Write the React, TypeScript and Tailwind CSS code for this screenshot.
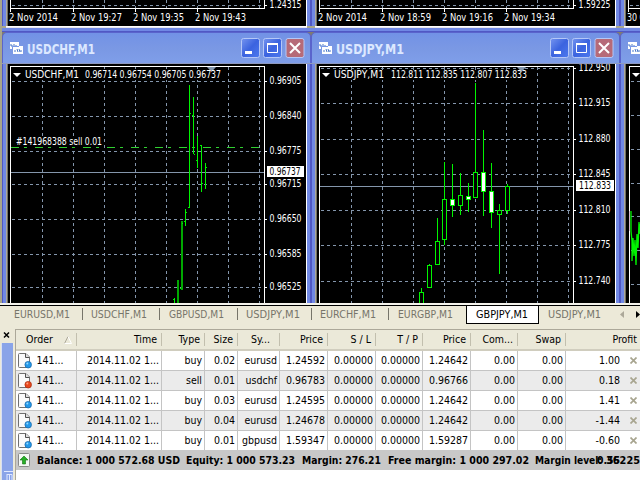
import React from "react";

type Label = { y: number; text: string };
type Candle = { x: number; high: number; low: number; top: number; bottom: number; filled?: boolean };
type Bar = { x: number; high: number; low: number; open?: number; close?: number; wide?: boolean };

const GRID = "#8496ac";
const LIME = "#00f400";

const usdchfLabels: Label[] = [
  { y: 81, text: "0.96905" },
  { y: 116, text: "0.96840" },
  { y: 151, text: "0.96775" },
  { y: 184, text: "0.96715" },
  { y: 219, text: "0.96650" },
  { y: 254, text: "0.96585" },
  { y: 287, text: "0.96525" },
];

const usdjpyLabels: Label[] = [
  { y: 68, text: "112.950" },
  { y: 103, text: "112.915" },
  { y: 139, text: "112.880" },
  { y: 174, text: "112.845" },
  { y: 210, text: "112.810" },
  { y: 245, text: "112.775" },
  { y: 281, text: "112.740" },
];

const bars: Bar[] = [
  { x: 174, high: 298, low: 303, open: 299 },
  { x: 177, high: 280, low: 303, wide: true },
  { x: 181, high: 221, low: 290, open: 288, close: 223, wide: true },
  { x: 185, high: 209, low: 226, open: 221, close: 212 },
  { x: 189, high: 85, low: 208, open: 207, close: 113 },
  { x: 193, high: 97, low: 154, open: 115, close: 154 },
  { x: 197, high: 136, low: 168, open: 160 },
  { x: 201, high: 145, low: 192, open: 145, close: 183 },
  { x: 205, high: 163, low: 189, close: 167 },
];

const candles: Candle[] = [
  { x: 421, high: 288, low: 303, top: 292, bottom: 306 },
  { x: 429, high: 264, low: 287, top: 265, bottom: 287 },
  { x: 437, high: 218, low: 264, top: 241, bottom: 264 },
  { x: 444, high: 162, low: 245, top: 199, bottom: 239 },
  { x: 452, high: 164, low: 217, top: 199, bottom: 205, filled: true },
  { x: 460, high: 173, low: 215, top: 195, bottom: 205 },
  { x: 468, high: 183, low: 212, top: 196, bottom: 199, filled: true },
  { x: 475, high: 83, low: 198, top: 172, bottom: 197 },
  { x: 483, high: 130, low: 216, top: 172, bottom: 191, filled: true },
  { x: 491, high: 163, low: 228, top: 191, bottom: 212, filled: true },
  { x: 499, high: 204, low: 274, top: 210, bottom: 214 },
  { x: 507, high: 184, low: 214, top: 186, bottom: 210 },
];

const orders = [
  { type: "buy", size: "0.02", symbol: "eurusd", open: "1.24592", price: "1.24642", profit: "1.00" },
  { type: "sell", size: "0.01", symbol: "usdchf", open: "0.96783", price: "0.96766", profit: "0.18" },
  { type: "buy", size: "0.03", symbol: "eurusd", open: "1.24595", price: "1.24642", profit: "1.41" },
  { type: "buy", size: "0.04", symbol: "eurusd", open: "1.24678", price: "1.24642", profit: "-1.44" },
  { type: "buy", size: "0.01", symbol: "gbpusd", open: "1.59347", price: "1.59287", profit: "-0.60" },
];

// width: tab class, box: inner width, x/length: where the caption sits
const tabs = [
  { text: "EURUSD,M1", width: "w-[81px]", box: 81, x: 12, length: 56 },
  { text: "USDCHF,M1", width: "w-[77px]", box: 77, x: 8, length: 56 },
  { text: "GBPUSD,M1", width: "w-[78px]", box: 78, x: 9, length: 55 },
  { text: "USDJPY,M1", width: "w-[74px]", box: 74, x: 8, length: 54 },
  { text: "EURCHF,M1", width: "w-[77px]", box: 77, x: 8, length: 56 },
  { text: "EURGBP,M1", width: "w-[77px]", box: 77, x: 9, length: 55 },
  { text: "GBPJPY,M1", width: "w-[73px]", box: 71, x: 9, length: 52 },
  { text: "USDJPY,M1", width: "w-[76px]", box: 76, x: 9, length: 53 },
];

const gridColumns =
  "grid grid-cols-[61px_85px_43px_33px_42px_48px_48px_47px_48px_47px_48px_75px]";

const ChartText = ({ x, y, length, fill = "#fff", children }: {
  x: number;
  y: number;
  length: number;
  fill?: string;
  children: string;
}) => (
  <text x={x} y={y} textLength={length} lengthAdjust="spacingAndGlyphs" fill={fill} fontSize="9.6" xmlSpace="preserve">
    {children}
  </text>
);

const Grid = ({ xs, ys, left, right, top, bottom }: {
  xs: number[];
  ys: number[];
  left: number;
  right: number;
  top: number;
  bottom: number;
}) => (
  <g stroke={GRID} strokeDasharray="3 3" shapeRendering="crispEdges">
    {xs.map(x => <path key={x} d={`M${x + 0.5} ${top + 1}V${bottom}`} />)}
    {ys.map(y => <path key={y} d={`M${left + 2} ${y + 0.5}H${right}`} />)}
  </g>
);

const PriceScale = ({ labels, x }: { labels: Label[]; x: number }) => (
  <g>
    {labels.map(l => (
      <g key={l.text}>
        <path d={`M${x} ${l.y + 0.5}h2`} stroke="#fff" shapeRendering="crispEdges" />
        <ChartText x={x + 4.5} y={l.y + 3} length={32}>{l.text}</ChartText>
      </g>
    ))}
  </g>
);

const UsdchfChart = () => (
  <svg className="block h-[239px] w-[298px] bg-black" viewBox="8 64 298 239">
    <Grid xs={[42, 73, 104, 135, 166, 197, 228, 259]} ys={usdchfLabels.map(l => l.y)} left={10} right={264} top={66} bottom={303} />
    <path d="M10.5 303V66.5H264.5V303" fill="none" stroke="#fff" shapeRendering="crispEdges" />
    <path d="M11 172.5H264" stroke={GRID} shapeRendering="crispEdges" />
    <path d="M11 147.5H261" stroke="#30d030" strokeDasharray="8 5 3 8" shapeRendering="crispEdges" />
    <g fill={LIME} shapeRendering="crispEdges">
      {bars.map(b => (
        <g key={b.x}>
          <rect x={b.x} y={b.high} width={b.wide ? 2 : 1} height={b.low - b.high} fill={b.wide ? "#00a800" : LIME} />
          {b.open && <rect x={b.x - 1} y={b.open} width="1" height="1" />}
          {b.close && <rect x={b.x + 1} y={b.close} width="1" height="1" />}
        </g>
      ))}
    </g>
    <rect x="12" y="69" width="210" height="11" fill="#000" />
    <path d="M207 67h9l-4.500 5z" fill="#8496ac" />
    <path d="M13 73h8l-4 4z" fill="#fff" />
    <ChartText x={25} y={78} length={54}>USDCHF,M1</ChartText>
    <ChartText x={85} y={78} length={136}>0.96714 0.96754 0.96705 0.96737</ChartText>
    <rect x="16" y="136" width="88" height="11" fill="#000" />
    <ChartText x={16} y={145} length={86}>#141968388 sell 0.01</ChartText>
    <PriceScale labels={usdchfLabels} x={265} />
    <rect x="267" y="166" width="37" height="11" fill="#fff" />
    <ChartText x={269.5} y={175} length={31} fill="#000">0.96737</ChartText>
  </svg>
);

const UsdjpyChart = () => (
  <svg className="block h-[239px] w-[298px] bg-black" viewBox="317 64 298 239">
    <Grid xs={[351, 382, 413, 444, 475, 506, 537, 568]} ys={usdjpyLabels.map(l => l.y)} left={319} right={573} top={66} bottom={303} />
    <path d="M319.500 303V66.500H573.500V303" fill="none" stroke="#fff" shapeRendering="crispEdges" />
    <path d="M320 186.500H573" stroke={GRID} shapeRendering="crispEdges" />
    <g stroke={LIME} shapeRendering="crispEdges">
      {candles.map(c => (
        <g key={c.x}>
          <path d={`M${c.x + 0.5} ${c.high}V${c.low}`} />
          <rect x={c.x - 1.5} y={c.top + 0.5} width="4" height={c.bottom - c.top} fill={c.filled ? "#fff" : "#000"} />
        </g>
      ))}
    </g>
    <rect x="321" y="70" width="207" height="10" fill="#000" />
    <path d="M517 67h9l-4.500 5z" fill="#8496ac" />
    <path d="M322 73h8l-4 4z" fill="#fff" />
    <ChartText x={334} y={78} length={50}>USDJPY,M1</ChartText>
    <ChartText x={391} y={78} length={136}>112.811 112.835 112.807 112.833</ChartText>
    <PriceScale labels={usdjpyLabels} x={574} />
    <rect x="576" y="180" width="38" height="11" fill="#fff" />
    <ChartText x={579} y={189} length={32} fill="#000">112.833</ChartText>
  </svg>
);

const ThirdChart = () => (
  <svg className="block h-[239px] w-[298px] bg-black" viewBox="626 64 298 239">
    <path d="M629.500 303V66.500H900" fill="none" stroke="#fff" shapeRendering="crispEdges" />
    <Grid xs={[]} ys={[81, 115, 149, 183, 216, 250, 284]} left={629} right={660} top={66} bottom={303} />
    <path d="M632 73h8l-4 4z" fill="#fff" />
    <path d="M629.500 211v20" stroke="#d8b8d0" />
    <path d="M631 211v20l1 10v20l1-23 1 18 1-16 1 25 1-31 1 14 1-26 1 12v-10" fill="none" stroke={LIME} strokeWidth="1.300" />
  </svg>
);

// Lower edge of the charts in the upper row, with their time axis
const TimeAxis = ({ origin, dates, scale }: { origin: number; dates: string[]; scale: string }) => (
  <svg className="block h-[26px] w-[298px] bg-black" viewBox={`${origin} 0 298 26`}>
    <Grid xs={[34, 65, 96, 127, 158, 189, 220, 251].map(x => x + origin)} ys={[5]} left={origin + 2} right={origin + 256} top={-1} bottom={8} />
    <path
      d={`M${origin + 2.5} 0V12M${origin + 2} 8.500H${origin + 256.5}V0M${origin + 257} 5.500h2M${origin + 65.5} 8v4M${origin + 127.5} 8v4M${origin + 189.5} 8v4`}
      fill="none"
      stroke="#fff"
      shapeRendering="crispEdges"
    />
    <ChartText x={origin + 261.5} y={8} length={32}>{scale}</ChartText>
    {dates.map((d, i) => (
      <ChartText key={d} x={origin + [1, 63, 125, 187][i]} y={21} length={i === 0 ? 49 : 51}>{d}</ChartText>
    ))}
  </svg>
);

const Client = ({ children }: { children: React.ReactNode }) => (
  <div className="flex">
    <div className="w-px bg-[#5058c4]" />
    <div className="w-[3px] bg-[#7088e4]" />
    <div className="w-px bg-[#aca899]" />
    <div className="w-px bg-[#716f64]" />
    {children}
    <div className="w-px bg-white" />
    <div className="w-[3px] bg-[#7088e4]" />
    <div className="w-px bg-[#5058c4]" />
  </div>
);

const CaptionButtons = () => (
  <svg className="h-[20px] w-[64px]" viewBox="0 0 64 20">
    <defs>
      <linearGradient id="captionBlue" x1="0" y1="0" x2="1" y2="1">
        <stop offset="0" stopColor="#7594ef" />
        <stop offset=".5" stopColor="#3b63df" />
        <stop offset="1" stopColor="#4d79ee" />
      </linearGradient>
    </defs>
    <g stroke="#b5c7f7">
      <rect x=".5" y=".5" width="18" height="19" rx="2" fill="url(#captionBlue)" />
      <rect x="22.500" y=".5" width="18" height="19" rx="2" fill="url(#captionBlue)" />
      <rect x="45" y=".5" width="18" height="19" rx="2" fill="#b66a78" />
    </g>
    <path d="M4 13h7v3H4z" fill="#fff" />
    <path d="M26.500 6.500h10v8h-10z" fill="none" stroke="#fff" />
    <path d="M26 6h11" stroke="#fff" strokeWidth="2" />
    <path d="M49 5l10 10m0-10l-10 10" stroke="#fff" strokeWidth="2" />
  </svg>
);

const TitleBar = ({ title, length }: { title: string; length: number }) => (
  <div className="bg-[#807c70]">
    <div className="flex h-[31px] items-center rounded-t-[5px] border-x border-t border-[#5a64cc] bg-linear-to-b from-[#7292e6] via-[#7a98e4] to-[#7f9ee9] pl-[7px] pr-[5px]">
      <svg className="h-[12px] w-[13px] shrink-0" viewBox="0 0 13 12">
        <path d="M0 0h9v7H0zM3 4h10v8H3z" fill="#fff" />
        <path d="M1 4V2m1 3V3m2 1V2m2 2V3M5 8v2m2-3l1 3m1-3l1 3m1 0V8" stroke="#4a78c8" />
        <path d="M2.500 7V4.500H9" fill="none" stroke="#7898e8" />
      </svg>
      <svg className="ml-[4px] h-[20px] w-[90px]" viewBox="0 0 90 20">
        <text x="0" y="15.500" textLength={length} lengthAdjust="spacingAndGlyphs" fontSize="13.500" fontWeight="700" fill="#dce8ff">{title}</text>
      </svg>
      <div className="ml-auto flex">
        <CaptionButtons />
      </div>
    </div>
  </div>
);

const ChartWindow = ({ title, length, origin, dates, scale, children }: {
  title: string;
  length: number;
  origin: number;
  dates: string[];
  scale: string;
  children: React.ReactNode;
}) => (
  <div className="w-[309px] shrink-0">
    <Client>
      <TimeAxis origin={origin} dates={dates} scale={scale} />
    </Client>
    <div className="mx-[4px] h-[2px] border-t border-white bg-[#e8e8f0]" />
    <div className="h-[4px] border-b border-[#5058c4] bg-[#7088e4]" />
    <TitleBar title={title} length={length} />
    <div className="h-px bg-[#8f9ac0]" />
    {children}
  </div>
);

const OrderIcon = ({ sell }: { sell: boolean }) => (
  <svg className="h-[16px] w-[14px]" viewBox="0 0 14 16">
    <path d="M.5 1.500Q.5.500 1.500.500H8L11.500 4V14.500H1.500Q.5 14.500.5 13.500z" fill="#fafafa" stroke="#707070" />
    <path d="M7.500.500V4.500H11.500" fill="#ddd" stroke="#505050" />
    <circle cx="10.200" cy="11.700" r="3.300" fill={sell ? "#e8481c" : "#2498e8"} stroke={sell ? "#a82808" : "#1464a8"} strokeWidth=".7" />
    <circle cx="9.300" cy="10.600" r="1" fill={sell ? "#ffa080" : "#90d8ff"} />
  </svg>
);

const Tabs = () => (
  <div className="flex h-[20px] border-t border-black bg-[#ece9d8] pl-[2px]">
    {tabs.map((tab, i) => (
      <div
        key={i}
        className={`${tab.width} ${i === 6 ? "h-[18px] border-x border-b border-black bg-white text-black" : "text-[#77756a]"} flex shrink-0 items-start`}
      >
        <svg className="h-[17px] w-full" viewBox={`0 0 ${tab.box} 17`}>
          <text x={tab.x} y="12" textLength={tab.length} lengthAdjust="spacingAndGlyphs" fontSize="11" fill="currentColor">
            {tab.text}
          </text>
          {i < 5 && <path d={`M${tab.box - 0.5} 2v12`} stroke="#77756a" />}
        </svg>
      </div>
    ))}
    <svg className="h-[18px] flex-1" viewBox="0 0 25 18">
      <path d="M9 5v7L5 8.500z" fill="#aca899" />
      <path d="M21 5v7l4-3.500z" fill="#000" />
    </svg>
  </div>
);

const HeaderCell = ({ children, right = "pr-[5px]" }: { children: React.ReactNode; right?: string }) => (
  <div className={`flex items-center justify-end ${right}`}>
    {children}
  </div>
);

const Divider = () => <span className="-mr-[5px] ml-[4px] h-[13px] w-px bg-[#c2bfae]" />;

const Cell = ({ children }: { children: React.ReactNode }) => (
  <div className="flex items-center justify-end border-r border-[#c4c4c4] pr-[2px]">{children}</div>
);

const headers = ["Time", "Type", "Size", "Sy...", "Price", "S / L", "T / P", "Price", "Com...", "Swap"];

const Terminal = () => (
  <div className="flex h-[155px] bg-[#ece9d8]">
    <div className="flex w-[15px] flex-col">
      <svg className="ml-[3px] mt-[6px] h-[8px] w-[8px]" viewBox="0 0 8 8">
        <path d="M1 1.500l5 5m0-5l-5 5" stroke="#000" strokeWidth="1.500" />
      </svg>
      <div className="ml-px mr-[2px] mt-[4px] flex flex-1 items-end border-l border-[#d8e0f4] bg-[#8aa4e8]">
        <svg className="h-[9px] w-[11px]" viewBox="0 0 11 9">
          <path d="M2 .500h9M5 3v6M5 3.500h5V9M7.500 4v5" fill="none" stroke="#e0e8ff" />
        </svg>
      </div>
    </div>
    <div className="mt-[4px] flex-1 border-l border-t border-[#aca899] bg-white">
      <div className={`${gridColumns} h-[21px] border-b-2 border-[#d0cdbe] bg-[#ebe9d9]`}>
        <div className="flex items-center pl-[10px]">
          Order
          <svg className="ml-[11px] h-[8px] w-[8px]" viewBox="0 0 8 8">
            <path d="M.5 7.500L4 .500" stroke="#aca899" />
            <path d="M4 .500L7.500 7.500H.5" fill="none" stroke="#fff" />
          </svg>
          <span className="ml-auto h-[13px] w-px bg-[#c2bfae]" />
        </div>
        {headers.map((h, i) => (
          <HeaderCell key={i}>
            <span className={h === "Sy..." ? "mr-[5px]" : ""}>{h}</span>
            <Divider />
          </HeaderCell>
        ))}
        <HeaderCell right="pr-[4px]">Profit</HeaderCell>
      </div>
      {orders.map((o, i) => (
        <div
          key={i}
          className={`${gridColumns} border-[#c4c4c4] ${i === 4 ? "h-[19px]" : "h-[20px] border-b"} ${i % 2 ? "bg-[#ebebeb]" : "bg-white"}`}
        >
          <div className="flex items-center border-r border-[#c4c4c4] pl-[2px]">
            <OrderIcon sell={o.type === "sell"} />
            <span className="ml-[4.500px]">141...</span>
          </div>
          <Cell>2014.11.02 1...</Cell>
          <Cell>{o.type}</Cell>
          <Cell>{o.size}</Cell>
          <Cell>{o.symbol}</Cell>
          <Cell>{o.open}</Cell>
          <Cell>0.00000</Cell>
          <Cell>0.00000</Cell>
          <Cell>{o.price}</Cell>
          <Cell>0.00</Cell>
          <Cell>0.00</Cell>
          <div className="flex items-center justify-end pr-[4px]">
            {o.profit}
            <svg className="ml-[10px] h-[7px] w-[7px]" viewBox="0 0 7 7">
              <path d="M.5.500l6 6m0-6l-6 6" stroke="#a8a590" strokeWidth="1.700" />
            </svg>
          </div>
        </div>
      ))}
      <div className="flex h-[20px] items-center bg-[#c8c8c8] pl-[2px]">
        <svg className="h-[14px] w-[13px]" viewBox="0 0 13 14">
          <rect x=".5" y=".5" width="11" height="13" rx="1" fill="#f4f8f4" stroke="#8a8a8a" />
          <path d="M6 3l4 4H7.500v4h-3V7H2z" fill="#28b028" stroke="#107010" strokeWidth=".6" />
        </svg>
        <svg className="ml-[5px] h-[20px] w-[605px]" viewBox="36 450 605 20">
          <g fontSize="11" fontWeight="700" fill="#000">
            <text x="37" y="464" textLength="143" lengthAdjust="spacingAndGlyphs">Balance: 1 000 572.68 USD</text>
            <text x="186" y="464" textLength="109" lengthAdjust="spacingAndGlyphs">Equity: 1 000 573.23</text>
            <text x="302" y="464" textLength="79" lengthAdjust="spacingAndGlyphs">Margin: 276.21</text>
            <text x="388" y="464" textLength="141" lengthAdjust="spacingAndGlyphs">Free margin: 1 000 297.02</text>
            <text x="535" y="464" textLength="67" lengthAdjust="spacingAndGlyphs">Margin level:</text>
            <text x="606" y="464" textLength="34" lengthAdjust="spacingAndGlyphs">36225</text>
            <text x="597" y="464" textLength="23" lengthAdjust="spacingAndGlyphs">0.55</text>
          </g>
        </svg>
      </div>
    </div>
  </div>
);

const App: React.FC = () => {
  return (
    <div className="h-[480px] w-[640px] overflow-hidden bg-white font-['DejaVu_Sans_Condensed','DejaVu_Sans',sans-serif] text-[10.5px] leading-none text-black [font-stretch:condensed]">
      <div className="flex h-[303px] w-[640px] overflow-hidden bg-[#a8a68c] pl-[2px]">
        <ChartWindow
          title="USDCHF,M1"
          length={68}
          origin={8}
          dates={["2 Nov 2014", "2 Nov 19:27", "2 Nov 19:35", "2 Nov 19:43"]}
          scale="1.24315"
        >
          <Client><UsdchfChart /></Client>
        </ChartWindow>
        <ChartWindow
          title="USDJPY,M1"
          length={68}
          origin={317}
          dates={["2 Nov 2014", "2 Nov 18:59", "2 Nov 19:16", "2 Nov 19:34"]}
          scale="1.59225"
        >
          <Client><UsdjpyChart /></Client>
        </ChartWindow>
        <ChartWindow title="EURCHF,M1" length={68} origin={626} dates={["30 Oct 2014"]} scale="1.20600">
          <Client><ThirdChart /></Client>
        </ChartWindow>
      </div>
      <div className="h-[2px] bg-[#f4f3ec]" />
      <Tabs />
      <div className="-mb-px h-px bg-white" />
      <Terminal />
    </div>
  );
};

export default App;
